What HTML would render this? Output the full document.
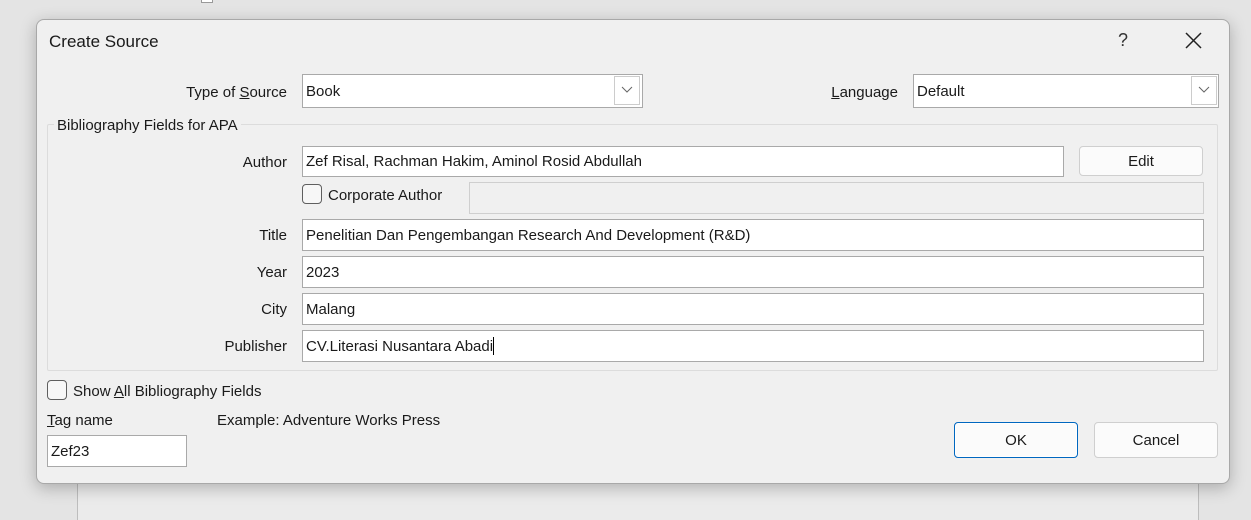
<!DOCTYPE html>
<html><head><meta charset="utf-8"><style>
*{box-sizing:border-box;margin:0;padding:0}
body{width:1251px;height:512px;background:#e4e4e4;position:relative;overflow:hidden;font-family:"Segoe UI","Liberation Sans",sans-serif;font-size:15px;color:#1a1a1a}
.a{position:absolute}
.page{left:77px;top:440px;width:1122px;height:80px;background:#ebebeb;border-left:1px solid #bdbdbd;border-right:1px solid #bdbdbd}
.dlg{left:36px;top:19px;width:1194px;height:465px;background:#f0f0f0;border:1px solid #a8a8a8;border-radius:8px;box-shadow:0 4px 16px rgba(0,0,0,.25)}
.in{position:absolute;background:#fff;border:1px solid #a9a9a9;padding-left:3px;display:flex;align-items:center;white-space:nowrap}
.lbl{position:absolute;text-align:right;width:200px;white-space:nowrap}
.cb{position:absolute;width:20px;height:20px;border:1px solid #5f5f5f;border-radius:4px;background:#f7f7f7}
.btn{position:absolute;border:1px solid #cfcfcf;border-radius:4px;background:#fbfbfb;display:flex;align-items:center;justify-content:center}
u{text-decoration:underline}
</style></head><body>
<div class="a" style="left:201px;top:0;width:12px;height:3px;border:1px solid #999;border-top:none;background:#fff"></div>
<div class="a page"></div>
<div class="a dlg"></div>
<div class="a" style="left:49px;top:32px;font-size:17px">Create Source</div>
<div class="a" style="left:1118px;top:30px;font-size:18px;color:#333">?</div>
<svg class="a" style="left:1185px;top:32px" width="17" height="17"><path d="M1 1L16 16M16 1L1 16" stroke="#222" stroke-width="1.5"/></svg>

<div class="lbl" style="left:87px;top:84px">Type of <u>S</u>ource</div>
<div class="in" style="left:302px;top:74px;width:341px;height:34px">Book</div>
<div class="a" style="left:614px;top:76px;width:26px;height:29px;border:1px solid #ccc;background:#fff"></div>
<svg class="a" style="left:621px;top:86px" width="12" height="8"><path d="M1 1L6 6L11 1" stroke="#666" fill="none"/></svg>
<div class="lbl" style="left:698px;top:84px"><u>L</u>anguage</div>
<div class="in" style="left:913px;top:74px;width:306px;height:34px">Default</div>
<div class="a" style="left:1191px;top:76px;width:26px;height:29px;border:1px solid #ccc;background:#fff"></div>
<svg class="a" style="left:1198px;top:86px" width="12" height="8"><path d="M1 1L6 6L11 1" stroke="#666" fill="none"/></svg>

<div class="a" style="left:47px;top:124px;width:1171px;height:247px;border:1px solid #dcdcdc;border-radius:2px"></div>
<div class="a" style="left:54px;top:117px;padding:0 3px;background:#f0f0f0">Bibliography Fields for APA</div>

<div class="lbl" style="left:87px;top:154px">Author</div>
<div class="in" style="left:302px;top:146px;width:762px;height:31px">Zef Risal, Rachman Hakim, Aminol Rosid Abdullah</div>
<div class="btn" style="left:1079px;top:146px;width:124px;height:30px">Edit</div>
<div class="cb" style="left:302px;top:184px"></div>
<div class="a" style="left:328px;top:187px">Corporate Author</div>
<div class="a" style="left:469px;top:182px;width:735px;height:32px;border:1px solid #cfcfcf;background:#f0f0f0"></div>

<div class="lbl" style="left:87px;top:227px">Title</div>
<div class="in" style="left:302px;top:219px;width:902px;height:32px">Penelitian Dan Pengembangan Research And Development (R&amp;D)</div>
<div class="lbl" style="left:87px;top:264px">Year</div>
<div class="in" style="left:302px;top:256px;width:902px;height:32px">2023</div>
<div class="lbl" style="left:87px;top:301px">City</div>
<div class="in" style="left:302px;top:293px;width:902px;height:32px">Malang</div>
<div class="lbl" style="left:87px;top:338px">Publisher</div>
<div class="in" style="left:302px;top:330px;width:902px;height:32px">CV.Literasi Nusantara Abadi<span style="display:inline-block;width:1px;height:18px;background:#000"></span></div>

<div class="cb" style="left:47px;top:380px"></div>
<div class="a" style="left:73px;top:383px">Show <u>A</u>ll Bibliography Fields</div>
<div class="a" style="left:47px;top:412px"><u>T</u>ag name</div>
<div class="a" style="left:217px;top:412px">Example: Adventure Works Press</div>
<div class="in" style="left:47px;top:435px;width:140px;height:32px">Zef23</div>
<div class="btn" style="left:954px;top:422px;width:124px;height:36px;border:1px solid #0067c0;box-shadow:inset 0 0 0 1px #fff">OK</div>
<div class="btn" style="left:1094px;top:422px;width:124px;height:36px">Cancel</div>
</body></html>
